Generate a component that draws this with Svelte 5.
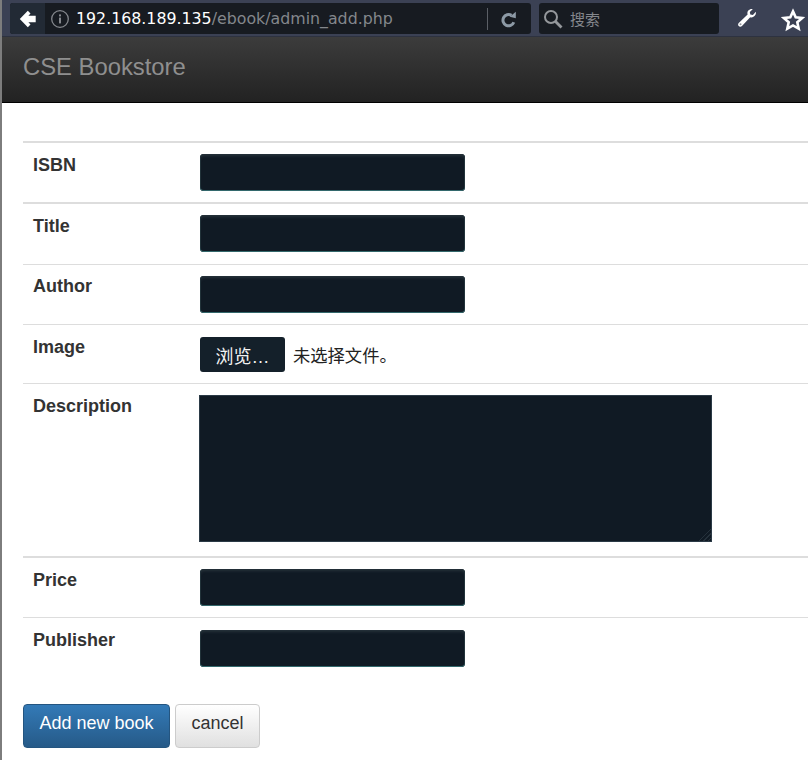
<script>
	const rows = [
		{ label: 'ISBN', kind: 'thick' },
		{ label: 'Title', kind: 'wide' },
		{ label: 'Author' },
		{ label: 'Image', file: true },
		{ label: 'Description', area: true },
		{ label: 'Price', kind: 'thick' },
		{ label: 'Publisher', kind: 'last' }
	];
</script>

<div class="page">
	<header class="chrome">
		<div class="urlbar">
			<button class="back" aria-label="Back">
				<svg width="18" height="18" viewBox="0 0 18 18"><path d="M.8 9 8.800.8l2.700 2.700L9.400 5.800h7.300v6.400H9.400l2.100 2.300-2.700 2.700z" fill="#fff" /></svg>
			</button>
			<svg class="info" width="20" height="20" viewBox="0 0 20 20">
				<circle cx="10" cy="10" r="8.300" fill="none" stroke="#85888d" stroke-width="1.300" />
				<rect x="9" y="8.600" width="2" height="5.800" fill="#85888d" />
				<rect x="9" y="5.400" width="2" height="2" fill="#85888d" />
			</svg>
			<span class="url"><b>192.168.189.135</b>/ebook/admin_add.php</span>
			<span class="sep"></span>
			<svg class="reload" width="18" height="18" viewBox="0 0 18 18">
				<path d="M13.800 12.200A5.600 5.600 0 1 1 11.500 5.400" fill="none" stroke="#8d9aa6" stroke-width="3" />
				<path d="M9.800 6.800 15.800 1.800V8.200z" fill="#8d9aa6" />
			</svg>
		</div>
		<div class="search">
			<svg width="20" height="20" viewBox="0 0 20 20">
				<circle cx="8" cy="8" r="6" fill="none" stroke="#94979b" stroke-width="2" />
				<path d="M12.500 12.500l6 6" stroke="#94979b" stroke-width="2.800" />
			</svg>
			<span>搜索</span>
		</div>
		<svg class="wrench" width="20" height="20" viewBox="0 0 20 20">
			<path d="M18.800 3.800c.8 3.200-2.300 6.400-5.600 5.400L5.200 17.700c-1.100 1.200-2.600 1.200-3.500.3s-.8-2.300.3-3.300l8.600-8.200C9.600 3.200 12.600.6 15.700 1.200L12.800 4l.5 2.400 2.600.5z" fill="#fff" />
			<circle cx="3.500" cy="16.300" r="1" fill="#8f939c" />
		</svg>
		<svg class="star" width="24" height="24" viewBox="0 0 24 24">
			<path d="M12 3.400l2.700 5.900 6.500.7-4.900 4.300 1.400 6.300L12 17.400l-5.700 3.200 1.400-6.300L2.800 10l6.500-.7z" fill="none" stroke="#fff" stroke-width="2.600" stroke-linejoin="miter" />
		</svg>
	</header>

	<nav class="navbar">CSE Bookstore</nav>

	<form class="content">
		{#each rows as row}
			<div class="row {row.kind ?? ''}" class:tall={row.area} class:short={row.file}>
				<label for={row.label}>{row.label}</label>
				{#if row.file}
					<div class="file">
						<span class="browse">浏览…</span>
						<span class="none">未选择文件。</span>
					</div>
				{:else if row.area}
					<textarea id={row.label}></textarea>
				{:else}
					<input id={row.label} type="text" />
				{/if}
			</div>
		{/each}
		<div class="actions">
			<button type="button" class="btn primary">Add new book</button>
			<button type="button" class="btn plain">cancel</button>
		</div>
	</form>
</div>

<style>
	:global(body) {
		margin: 0;
		background: #fff;
	}

	.page {
		width: 808px;
		height: 760px;
		overflow: hidden;
		box-sizing: border-box;
		border-left: 2px solid #7d7d7d;
		font-family: "Liberation Sans", Arial, sans-serif;
		color: #333;
	}

	.chrome {
		height: 37px;
		margin-left: -2px;
		padding: 3px 0 0 10px;
		box-sizing: border-box;
		display: flex;
		align-items: flex-start;
		background: #3b4154;
		border-bottom: 1px solid #2d3240;
	}

	.urlbar {
		width: 521px;
		height: 31px;
		box-sizing: border-box;
		display: flex;
		align-items: center;
		background: #171b21;
		border-radius: 3px;
	}

	.back {
		width: 35px;
		height: 31px;
		flex: none;
		padding: 0;
		border: 0;
		border-radius: 3px 0 0 3px;
		background: #222a35;
		display: flex;
		align-items: center;
		justify-content: center;
	}

	.info {
		margin-left: 5px;
		flex: none;
	}

	.url {
		margin-left: 6px;
		width: 402px;
		flex: none;
		font-family: "DejaVu Sans", sans-serif;
		font-size: 15.800px;
		color: #84878c;
		white-space: nowrap;
	}

	.url b {
		font-weight: 400;
		color: #fff;
	}

	.sep {
		width: 1px;
		height: 22px;
		background: #5b5f66;
		flex: none;
		margin-left: 9px;
	}

	.reload {
		margin-left: 12px;
		flex: none;
	}

	.search {
		width: 180px;
		height: 31px;
		margin-left: 8px;
		padding-left: 4px;
		box-sizing: border-box;
		display: flex;
		align-items: center;
		gap: 7px;
		background: #171b21;
		border-radius: 3px;
		font-family: "Noto Sans CJK SC", sans-serif;
		font-size: 15px;
		color: #84878c;
	}

	.wrench {
		margin: 5px 0 0 18px;
		flex: none;
	}

	.star {
		margin: 5px 0 0 24px;
		flex: none;
	}

	.navbar {
		height: 66px;
		margin-left: -2px;
		padding: 16px 0 0 23px;
		box-sizing: border-box;
		background: linear-gradient(#3c3c3c, #222);
		border-bottom: 1px solid #000;
		font-size: 23.800px;
		line-height: 28px;
		color: #8f8f8f;
	}

	.content {
		padding: 38px 0 0 21px;
	}

	.row {
		height: 60px;
		box-sizing: border-box;
		display: flex;
		align-items: flex-start;
		padding: 11px 0 0 10px;
		border-top: 1px solid #ddd;
	}

	.row.thick {
		height: 61px;
		border-top-width: 2px;
	}

	.row.wide {
		height: 62px;
		border-top-width: 2px;
	}

	.row.short {
		height: 59px;
		padding-top: 12px;
	}

	.row.tall {
		height: 173px;
	}

	.row.last {
		padding-top: 12px;
	}

	label {
		width: 167px;
		flex: none;
		font-size: 18px;
		font-weight: 700;
		line-height: 20px;
	}

	.thick label,
	.wide label,
	.tall label {
		padding-top: 1px;
	}

	input {
		width: 265px;
		height: 37px;
		margin: 0;
		padding: 0;
		box-sizing: border-box;
		background: #101a24;
		border: 0;
		border-radius: 4px;
		box-shadow: inset 0 3px 3px -1px #26323a, inset 0 -1px 0 #33686c, inset 1px 0 0 #22333b, inset -1px 0 0 #22333b;
	}

	textarea {
		width: 513px;
		height: 147px;
		margin: 0 0 0 -1px;
		padding: 0;
		box-sizing: border-box;
		display: block;
		resize: none;
		background:
			linear-gradient(135deg, #101a24 50%, transparent 50%) right bottom / 14px 14px no-repeat,
			repeating-linear-gradient(135deg, #101a24 0 2px, #25313b 2px 3px) right bottom / 14px 14px no-repeat,
			#101a24;
		border: 1px solid #2b3a46;
		border-radius: 0;
	}

	.file {
		display: flex;
		align-items: center;
		gap: 8px;
		font-family: "Liberation Sans", "Noto Sans CJK SC", sans-serif;
		font-size: 17.300px;
		color: #222;
	}

	.browse {
		width: 85px;
		height: 35px;
		display: flex;
		align-items: center;
		justify-content: center;
		background: #14202a;
		border-radius: 3px;
		color: #f2f2f2;
		font-size: 18px;
	}

	.actions {
		display: flex;
		gap: 5px;
		padding: 27px 0 0 0;
	}

	.btn {
		height: 44px;
		padding: 0 0 5px;
		font-family: inherit;
		font-size: 18px;
		border-radius: 4px;
		box-sizing: border-box;
	}

	.primary {
		width: 147px;
		color: #fff;
		background: linear-gradient(#337ab7, #265a88);
		border: 1px solid #245580;
	}

	.plain {
		width: 85px;
		color: #333;
		background: linear-gradient(#fff, #e0e0e0);
		border: 1px solid #ccc;
	}
</style>
